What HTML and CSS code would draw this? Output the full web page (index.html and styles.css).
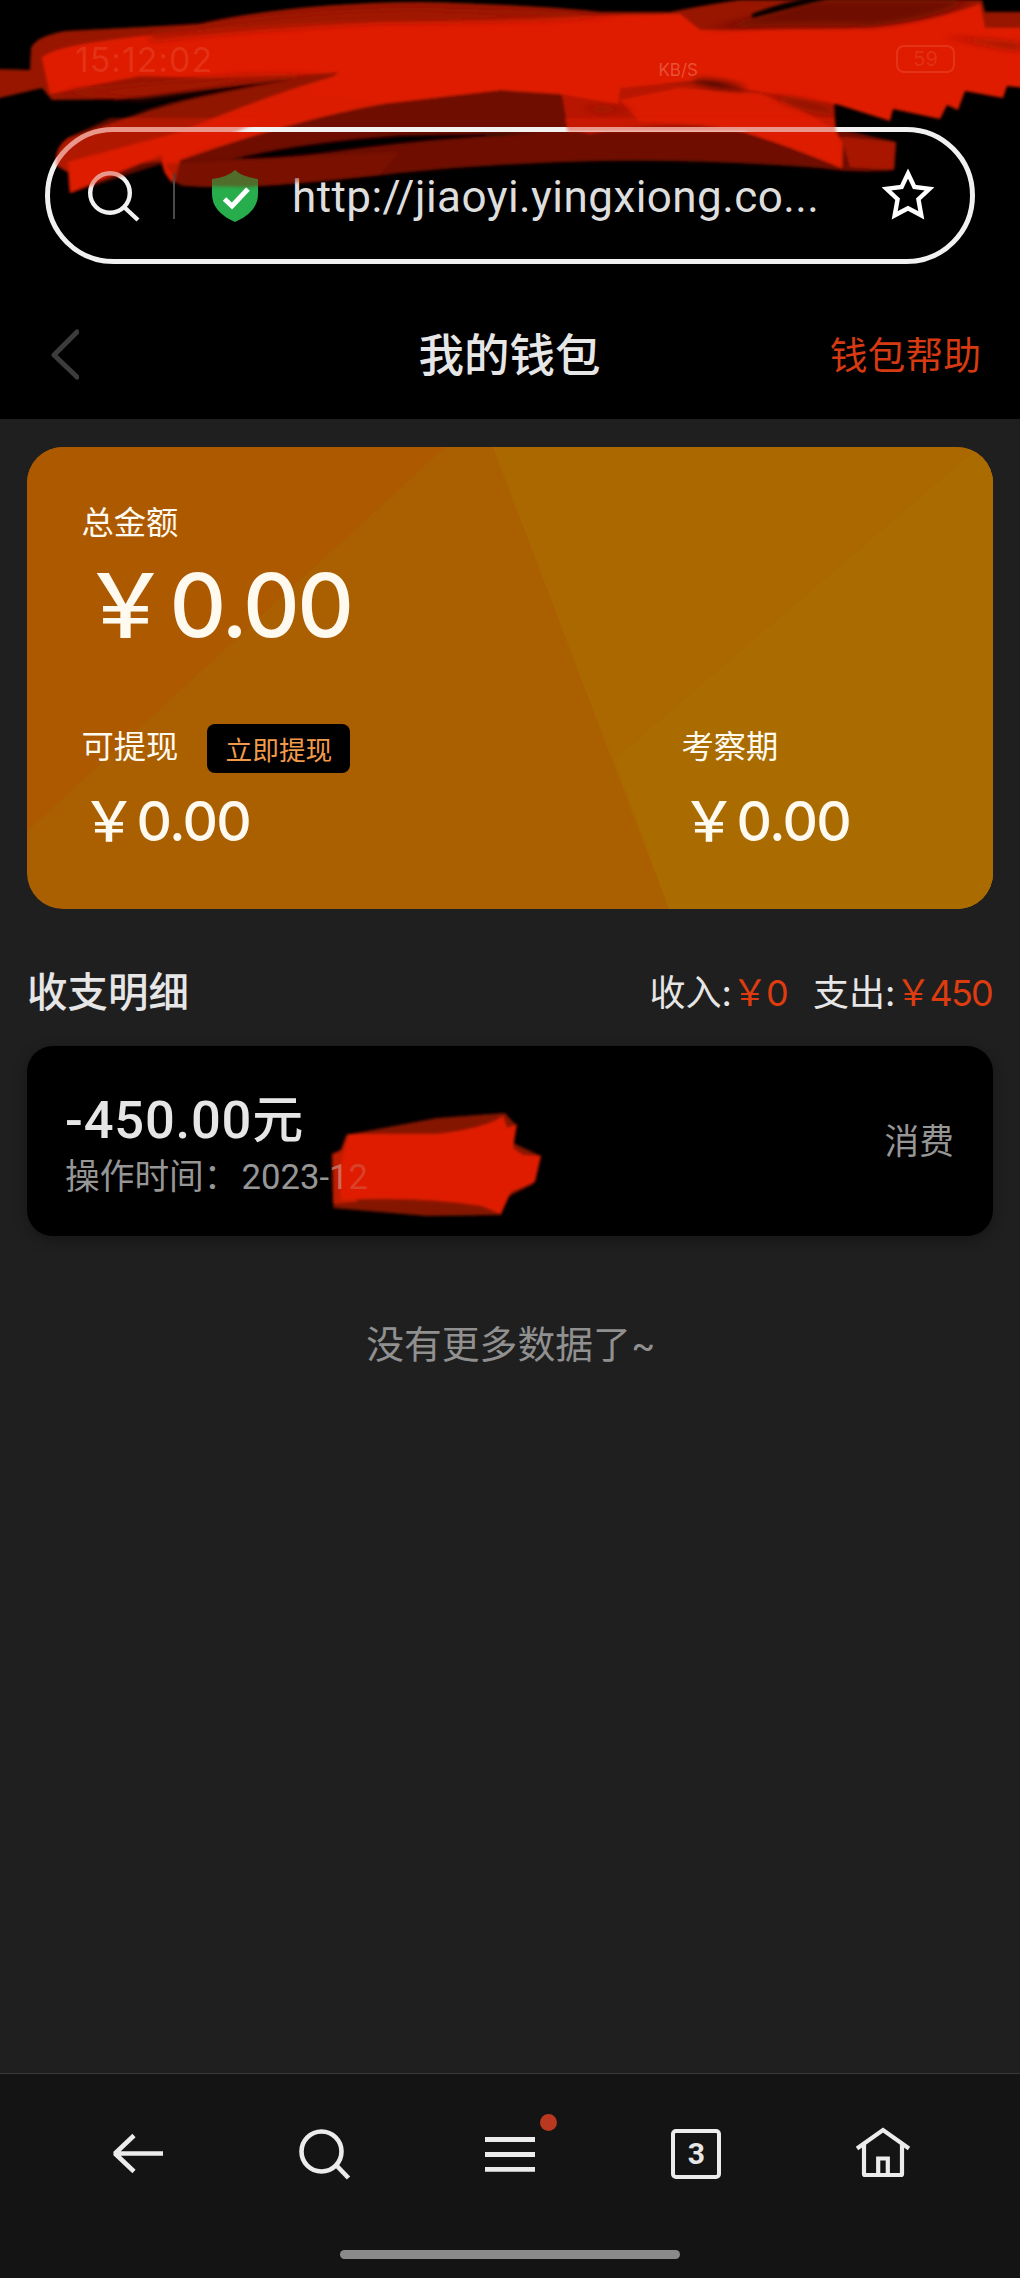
FILE: index.html
```html
<!DOCTYPE html>
<html lang="zh-CN">
<head>
<meta charset="utf-8">
<title>我的钱包</title>
<link rel="stylesheet" href="styles.css">
</head>
<body>
<div class="screen">
  <header class="browser">
    <svg class="scribble" width="1020" height="210" viewBox="0 0 1020 210">
      <defs>
        <filter id="soft" x="-5%" y="-10%" width="110%" height="120%"><feGaussianBlur stdDeviation="1.8"/></filter>
        <filter id="softer" x="-5%" y="-30%" width="110%" height="160%"><feGaussianBlur stdDeviation="3.5"/></filter>
      </defs>
      <g filter="url(#soft)">
        <path fill="#981400" d="M30 70L31 48Q36 36 66 31L200 24Q290 3 420 2Q520 4 600 12L670 12Q710 4 740 0L982 0L985 12L1025 12L1025 80L880 90L510 90L170 98L52 100L42 88L-5 99L-5 69Z"/>
        <path fill="#6e1000" d="M162 162Q164 148 180 142L320 105L510 84L900 84L834 105L836 128L896 142L894 170Q860 174 820 168Q700 159 600 161Q500 163 400 173Q250 191 190 186Q165 184 162 162Z"/>
        <path fill="#000" d="M232 159Q300 142 400 135L540 133Q430 139 350 150Q280 160 232 159Z"/>
        <path fill="#901400" d="M56 165Q54 148 68 138L150 110Q240 84 320 76L370 76L320 110L170 160L68 172Z"/>
        <path fill="#dc1e00" d="M68 162L180 132Q280 90 350 72L560 64L500 90L388 103Q300 118 180 160L174 184Q160 172 162 155L70 193Z"/>
        <path fill="#b81800" d="M560 84L780 84L834 102L834 130L760 130Q660 118 590 134L568 128Z"/>
        <path fill="#a81700" d="M842 137L896 142L894 170L850 167Z"/>
        <path fill="#dc1e00" d="M680 88L760 94Q800 106 834 130L843 142L842 168Q790 146 744 132Q700 122 640 122L620 100Z"/>
        <path fill="#000" d="M115 99Q190 89 292 79Q210 94 115 116Z"/>
        <path fill="#e01e00" d="M42 58Q50 48 110 40Q240 23 330 22L510 18L680 14L700 30L840 29Q920 26 980 4L985 28L1025 28L1025 88L1007 86L1003 98L965 91L958 110L947 105L940 119L893 109L890 121L836 104L780 95L700 80L620 88L618 104L560 94L500 90L388 103L310 92L340 72L240 79L140 76L50 94Z"/>
      </g>
      <g filter="url(#softer)">
        <path fill="#6e1000" d="M705 29Q750 20 800 4L815 0L970 0Q930 20 870 26Q800 22 705 29Z"/>
        <path fill="#a01600" d="M150 34Q300 10 420 10L620 16Q500 22 380 22Q240 30 150 40Z"/>
        <path fill="#a01600" d="M60 92L240 76L320 74L240 84L140 98Z"/>
        <path fill="#160200" d="M692 80Q720 79 748 89Q710 88 692 80Z"/>
        <path fill="#8a1200" d="M770 96Q800 98 832 108L834 114Q800 110 770 96ZM580 107L640 109L600 112ZM940 36L1020 44V50Q980 44 940 36Z"/>
      </g>
      <path filter="url(#soft)" fill="#000" d="M752 14Q780 3 815 -3L830 -2Q790 8 752 18Z"/>
    </svg>
    <div class="status">
      <span class="time">15:12:02</span>
      <span class="speed">KB/S</span>
      <span class="battery">59</span>
    </div>
    <div class="address">
      <svg class="find" width="54" height="54" viewBox="0 0 54 54" fill="none" stroke="#f2f2f2" stroke-width="4.4"><circle cx="23" cy="24" r="19.8"/><path d="M37 38L51 51"/></svg>
      <i class="divider"></i>
      <svg class="shield" width="46" height="52" viewBox="0 0 46 52"><path fill="#27ad4b" d="M23 0Q30 7 46 9V24Q46 42 23 52Q0 42 0 24V9Q16 7 23 0Z"/><path d="M12.500 29L20 36L36 19" fill="none" stroke="#fff" stroke-width="5"/></svg>
      <span class="url">http://jiaoyi.yingxiong.co...</span>
      <svg class="star" width="56" height="54" viewBox="0 0 56 54"><path fill="none" stroke="#fff" stroke-width="4.400" d="M28 6.500L34.400 19.900L49.500 21.900L38.400 32.200L41.300 48.300L28 41.200L14.700 48.300L17.600 32.200L6.500 21.900L21.600 19.900Z"/></svg>
    </div>
    <svg class="scribble tint" width="1020" height="210" viewBox="0 0 1020 210">
      <g filter="url(#soft)" fill="#e01e00">
        <path d="M56 165Q54 148 68 138L110 118H270Q220 138 180 158L70 193L68 172Z"/>
        <path d="M564 118H834L842 168Q790 146 744 132H568Z"/>
      </g>
      <path filter="url(#soft)" fill="#8a1400" d="M165 164L250 160L400 152L380 174L250 187L180 186Z"/>
    </svg>
  </header>

  <div class="titlebar">
    <svg width="30" height="52" viewBox="0 0 30 52" fill="none" stroke="#3c3c3c" stroke-width="5" stroke-linecap="round" stroke-linejoin="round"><path d="M28 3L5 26L28 48"/></svg>
    <h1>我的钱包</h1>
    <a class="help">钱包帮助</a>
  </div>

  <main>
    <section class="wallet">
      <svg class="facets" width="966" height="462" viewBox="0 0 966 462">
        <path fill="#aa6000" d="M0 0H966V462H0Z"/>
        <path fill="#ac5900" d="M0 0H418L0 384Z"/>
        <path fill="#ab6700" d="M466 0H966V462H642Z"/>
        <path fill="#aa6c00" d="M966 0H952L588 312L642 462H966Z"/>
      </svg>
      <div class="total">
        <div class="label">总金额</div>
        <div class="amount big">￥<span>0.00</span></div>
      </div>
      <div class="split">
        <div class="part">
          <div class="label">可提现<button>立即提现</button></div>
          <div class="amount">￥<span>0.00</span></div>
        </div>
        <div class="part">
          <div class="label">考察期</div>
          <div class="amount">￥<span>0.00</span></div>
        </div>
      </div>
    </section>

    <div class="summary">
      <h2>收支明细</h2>
      <div class="sums"><span>收入:<b>￥0</b></span><span>支出:<b>￥450</b></span></div>
    </div>

    <section class="record">
      <svg class="smear" width="250" height="120" viewBox="0 0 250 120">
        <g filter="url(#soft)">
          <path fill="#841200" d="M54 32L140 16L208 11L218 22L214 40L244 54L236 82L208 96L204 113L130 114L36 106Z"/>
          <path fill="#c01a00" d="M35 52L44 48L50 32L60 36L60 100L36 102Z"/>
          <path fill="#e01e00" d="M52 32L140 32Q190 26 206 14L210 26L220 22L216 46L226 53L244 54L238 80L214 90L204 112L185 104Q120 94 44 98L42 70Z"/>
        </g>
      </svg>
      <div class="info">
        <div class="money">-450.00<span>元</span></div>
        <div class="when">操作时间：<span>2023-<i>1</i><i class="faint">2</i></span></div>
      </div>
      <div class="kind">消费</div>
    </section>
    <p class="end">没有更多数据了~</p>
  </main>

  <footer>
    <nav>
      <span class="item"><svg width="56" height="56" viewBox="0 0 56 56" fill="none" stroke="#ececec" stroke-width="4.600"><path d="M54 27.500H6M25 9.500L6 27.500L25 45.500" stroke-linejoin="bevel"/></svg></span>
      <span class="item"><svg width="56" height="56" viewBox="0 0 56 56" fill="none" stroke="#ececec" stroke-width="4.600"><circle cx="25.500" cy="25.500" r="20"/><path d="M40 39L52.500 52"/></svg></span>
      <span class="item"><svg width="56" height="56" viewBox="0 0 56 56" fill="none" stroke="#ececec" stroke-width="4.800"><path d="M3 13.500H53M3 28.500H53M3 43.300H53"/></svg><i class="dot"></i></span>
      <span class="item"><span class="tabs">3</span></span>
      <span class="item"><svg width="56" height="56" viewBox="0 0 56 56" fill="none" stroke="#ececec" stroke-width="4.200"><path d="M2 22.500L28 4L54 22.500M9 17V48Q9 49 10 49H46Q47 49 47 48V17M23.200 49V32.500H32.800V49"/></svg></span>
    </nav>
    <div class="gesture"></div>
  </footer>
</div>
</body>
</html>
```
FILE: styles.css
```css
* { box-sizing: border-box; }
body { margin: 0; background: #1f1f1f; font-family: Inter, "Noto Sans CJK SC", sans-serif; color: #e6e6e6; }
h1, h2, p { margin: 0; font-weight: 500; }
svg { display: block; flex: none; }
.screen { width: 1020px; height: 2278px; display: flex; flex-direction: column; overflow: hidden; }

.browser { position: relative; height: 290px; background: #000; display: flex; flex-direction: column; }
.scribble { position: absolute; left: 0; top: 0; }
.tint { opacity: .42; z-index: 2; }
.status { position: relative; height: 127px; padding: 41px 65px 0 75px; display: flex; align-items: flex-start; color: rgba(255,210,190,.12); }
.time { font-size: 34px; line-height: 38px; letter-spacing: .9px; }
.speed { margin-left: auto; margin-top: 19px; margin-right: 198px; font-size: 17px; line-height: 20px; color: rgba(255,220,200,.28); }
.battery { width: 59px; height: 28px; margin-top: 4px; border: 2px solid rgba(255,210,190,.13); border-radius: 8px; font-size: 20px; line-height: 24px; text-align: center; }
.address { position: relative; width: 930px; height: 137px; margin: 0 45px; border: 5px solid #f1f1f1; border-radius: 69px; display: flex; align-items: center; padding: 0 34px 0 37px; }
.divider { width: 2px; height: 46px; margin-left: 32px; background: #4a4a4a; }
.shield { margin-left: 37px; }
.url { margin-left: 34px; margin-top: 2px; font: 44px/60px Roboto, sans-serif; letter-spacing: .44px; color: #dedede; white-space: nowrap; }
.star { margin-left: auto; margin-bottom: 3px; }

.titlebar { height: 129px; background: #000; padding: 0 39px 0 49px; display: grid; grid-template-columns: 1fr auto 1fr; align-items: center; }
.titlebar h1 { font-size: 45.500px; line-height: 60px; margin-left: -11px; margin-top: 2px; }
.help { justify-self: end; font-size: 37.800px; line-height: 54px; color: #d63a12; }

main { flex: 1; padding: 28px 27px 0; }
.wallet { position: relative; height: 462px; padding: 48px 54.500px 0; border-radius: 36px; overflow: hidden; color: #fffaf0; }
.facets { position: absolute; left: 0; top: 0; }
.total, .split { position: relative; }
.label { display: flex; align-items: center; height: 50px; font-size: 32.300px; }
.label button { width: 143px; height: 49px; margin-left: 29px; margin-top: 9px; padding: 0; border: 0; border-radius: 8px; background: #000; color: #f29a4c; font: 26.700px/49px "Noto Sans CJK SC", sans-serif; }
.amount { display: flex; height: 76px; line-height: 76px; font-size: 55px; font-weight: 500; }
.amount span { letter-spacing: -.03em; }
.split .amount { margin-top: 14px; }
.big { height: 120px; line-height: 120px; font-size: 88px; }
.split { display: grid; grid-template-columns: 600px 1fr; margin-top: 54px; }

.summary { height: 137px; padding-top: 24px; display: flex; align-items: center; justify-content: space-between; }
.summary h2 { font-size: 40.500px; }
.sums { display: flex; gap: 25px; font-size: 36px; }
.sums b { font-weight: 400; color: #dc3c10; letter-spacing: -.05em; margin-right: 1px; }
.record { position: relative; height: 190px; background: #000; border-radius: 26px; padding: 0 39px 0 38px; display: flex; align-items: center; justify-content: space-between; box-shadow: 0 4px 14px rgba(0,0,0,.3); }
.info { position: relative; padding-top: 9px; }
.money { font-family: Roboto, "Noto Sans CJK SC", sans-serif; font-size: 52.500px; font-weight: 500; line-height: 60px; letter-spacing: .8px; }
.money span { font-size: 51px; letter-spacing: 0; }
.when, .kind { font-size: 34.700px; line-height: 50px; color: #969696; }
.when span { font-family: Roboto, sans-serif; margin-left: 3px; }
.when i { font-style: normal; color: rgba(205,160,150,.6); }
.when .faint { color: rgba(205,160,150,.28); }
.smear { position: absolute; left: 270px; top: 56px; }
.end { margin-top: 80px; padding-left: 2px; text-align: center; font-size: 37.800px; line-height: 56px; font-weight: 400; color: #909090; }

footer { height: 205px; background: #141414; border-top: 1px solid #3a3a3a; }
nav { height: 160px; padding: 0 44px; display: grid; grid-template-columns: repeat(5, 1fr); }
.item { position: relative; display: flex; align-items: center; justify-content: center; }
.dot { position: absolute; right: 46px; top: 40px; width: 17px; height: 17px; border-radius: 50%; background: #ba3820; }
.tabs { width: 50px; height: 50px; border: 4.500px solid #ececec; border-radius: 5px; font: bold 30px/41px Roboto, sans-serif; text-align: center; }
.gesture { width: 340px; height: 9px; margin: 16px auto 0; border-radius: 5px; background: #8a8a8a; }
```
